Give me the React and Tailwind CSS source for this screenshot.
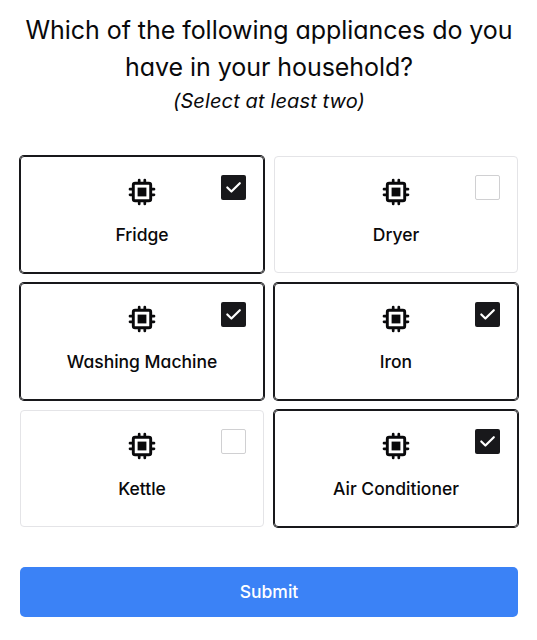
import React, { useState } from "react";

const APPLIANCES = ["Fridge", "Dryer", "Washing Machine", "Iron", "Kettle", "Air Conditioner"];

function ChipIcon() {
  return (
    <svg className="h-[28px] w-[28px] text-[#09090b]" viewBox="0 0 28 28" fill="none" stroke="currentColor" aria-hidden="true">
      <rect x="5.3" y="5.3" width="17.4" height="17.4" rx="1.8" strokeWidth="2.9" />
      <rect x="9.6" y="9.6" width="8.8" height="8.8" fill="currentColor" stroke="none" />
      <path
        d="M11.2 2V4.5M16.8 2V4.5M11.2 23.5V26M16.8 23.5V26M2 11.2H4.5M2 16.8H4.5M23.5 11.2H26M23.5 16.8H26"
        strokeWidth="2.7"
        strokeLinecap="round"
      />
    </svg>
  );
}

function Checkbox({ checked }) {
  return (
    <span
      className={
        checked
          ? "absolute right-[17px] top-[18px] flex size-[25px] items-center justify-center rounded-[2px] bg-[#18181b]"
          : "absolute right-[17px] top-[18px] size-[25px] rounded-[2px] border border-[#d0d0d2] bg-white"
      }
    >
      {checked && (
        <svg
          className="h-[25px] w-[25px]"
          viewBox="0 0 25 25"
          fill="none"
          stroke="white"
          strokeWidth="2.2"
          strokeLinecap="round"
          strokeLinejoin="round"
          aria-hidden="true"
        >
          <path d="M6.3 12.5L10.4 16.5L18.8 8.2" />
        </svg>
      )}
    </span>
  );
}

function ApplianceCard({ name, checked, onToggle }) {
  return (
    <button
      type="button"
      role="checkbox"
      aria-checked={checked}
      onClick={onToggle}
      className={
        checked
          ? "relative flex h-[117px] flex-col items-center rounded-[4px] border border-[#18181b] pt-[21px] ring-1 ring-[#18181b]"
          : "relative flex h-[117px] flex-col items-center rounded-[4px] border border-[#e4e4e7] pt-[21px]"
      }
    >
      <ChipIcon />
      <span className="mt-[15px] text-[17.5px] font-medium leading-[28px]">{name}</span>
      <Checkbox checked={checked} />
    </button>
  );
}

export default function App() {
  const [selected, setSelected] = useState(["Fridge", "Washing Machine", "Iron", "Air Conditioner"]);
  const toggle = (name) =>
    setSelected((prev) => (prev.includes(name) ? prev.filter((n) => n !== name) : [...prev, name]));

  return (
    <main className="h-[640px] w-[537px] bg-white pl-[20px] pr-[19px] pt-[12px] font-['Inter',sans-serif] text-[#09090b] [font-feature-settings:'cv11']">
      <header className="text-center">
        <h1 className="whitespace-nowrap text-[25px] font-normal leading-[37px] tracking-[-0.05px]">
          Which of the following appliances do you
          <br />
          have in your household?
        </h1>
        <p className="text-[20px] italic leading-[30px] tracking-[0.13px]">(Select at least two)</p>
      </header>
      <div className="mt-[40px] grid grid-cols-2 gap-[10px]">
        {APPLIANCES.map((name) => (
          <ApplianceCard key={name} name={name} checked={selected.includes(name)} onToggle={() => toggle(name)} />
        ))}
      </div>
      <button type="button" className="mt-[40px] h-[50px] w-full rounded-[5px] bg-[#3b82f6] text-[17.5px] font-medium text-white">
        Submit
      </button>
    </main>
  );
}
